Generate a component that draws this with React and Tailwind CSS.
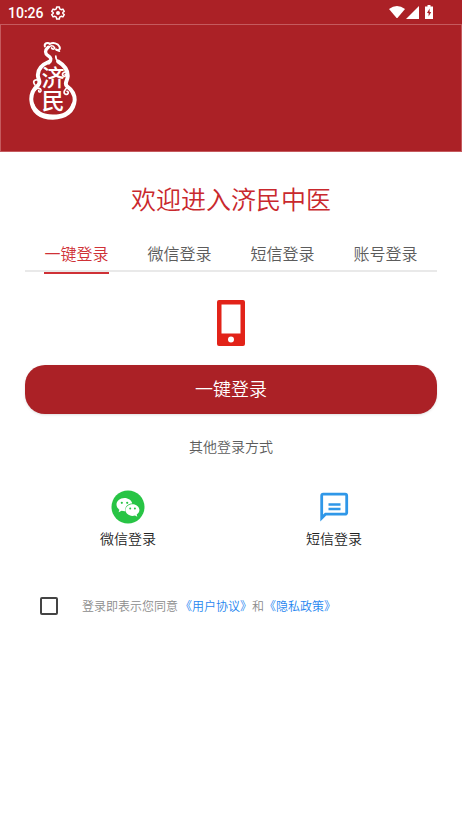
import { useState } from 'react'

const TABS = ['一键登录', '微信登录', '短信登录', '账号登录']

function StatusBar() {
  return (
    <div className="flex h-6 items-center justify-between pl-2 pr-[29px] text-white">
      <div className="flex items-center gap-1.5 pt-0.5 font-[Roboto,sans-serif] text-sm font-medium">
        <span>10:26</span>
        <svg className="h-4 w-4" viewBox="0 0 24 24" fill="none" stroke="currentColor">
          <path strokeWidth="2.200" strokeLinejoin="round" d="M10 3h4l.5 2.800 2.300 1.300 2.600-1 2 3.400-2.200 1.800v1.400l2.200 1.800-2 3.400-2.600-1-2.300 1.300L14 21h-4l-.5-2.800-2.300-1.300-2.600 1-2-3.400 2.200-1.800v-1.400L2.600 9.500l2-3.400 2.600 1 2.300-1.300z" />
          <circle cx="12" cy="12" r="3" fill="currentColor" stroke="none" />
        </svg>
      </div>
      <div className="flex items-center">
        <svg className="h-3 w-4" viewBox="0 0 16 12" fill="currentColor">
          <path d="M0 3 Q8 -3 16 3 L8 12.500 Z" />
        </svg>
        <svg className="ml-px h-[13px] w-[13px]" viewBox="0 0 13 13" fill="currentColor">
          <path d="M13 0v13H0z" />
        </svg>
        <svg className="ml-1.5 h-3.5 w-2" viewBox="0 0 8 14">
          <path d="M2.500 0h3v1.500H8V14H0V1.500h2.500z" fill="currentColor" />
          <path d="M4.600 3.500 2 8h1.600v3.500L6.200 7H4.600z" fill="#ab2126" />
        </svg>
      </div>
    </div>
  )
}

function GourdLogo() {
  return (
    <svg className="h-20 w-12" viewBox="40 34 145 240" fill="none" stroke="#fff" strokeLinecap="round" role="img" aria-label="济民">
      {/* head */}
      <path strokeWidth="6" d="M88 50C85 40 97 36 103 42C113 37 127 40 132 50C136 59 128 64 122 59" />
      <path strokeWidth="5" d="M98 54C104 45 113 46 117 53M108 54C110 59 116 59 118 55M122 59L132 64" />
      <path strokeWidth="10" d="M98 52C87 61 88 71 97 77C107 83 110 90 100 99" />
      {/* gourd body */}
      <path strokeWidth="12" d="M102 95C78 105 65 119 67 139C68 151 77 156 68 166C51 180 46 193 47 211C49 246 74 265 112 265C150 265 176 245 178 211C178 193 169 180 155 170C145 162 156 154 157 140C158 119 146 106 128 95" />
      <path strokeWidth="5" d="M130 96C123 91 120 87 121 79" />
      <path strokeWidth="9" d="M51 223C60 249 83 260 112 260C143 260 165 248 173 223" />
      {/* curls */}
      <path strokeWidth="5" d="M155 127C143 124 138 134 144 139C149 142 153 137 149 134M159 172C147 178 142 190 150 194C158 197 162 187 155 185M58 182C66 171 78 176 76 184C74 190 67 187 70 182M58 166C50 156 56 149 65 151" />
      <text
        x="113"
        y="107"
        className="[writing-mode:vertical-rl]"
        fill="#fff"
        stroke="none"
        fontSize="70"
        fontWeight="500"
      >
        济民
      </text>
    </svg>
  )
}

function PhoneIcon() {
  return (
    <svg className="h-[46px] w-7" viewBox="0 0 28 46" fill="#e22319">
      <path fillRule="evenodd" d="M2 0h24a2 2 0 0 1 2 2v42a2 2 0 0 1-2 2H2a2 2 0 0 1-2-2V2a2 2 0 0 1 2-2zm2.500 4.500v29h19v-29zM14 36.500a3 3 0 1 0 0 6 3 3 0 0 0 0-6z" />
    </svg>
  )
}

function WechatIcon() {
  return (
    <svg className="h-[34px] w-[34px]" viewBox="0 0 34 34">
      <circle cx="17" cy="17" r="16.500" fill="#28c445" />
      <path fill="#fff" d="M13.500 8C8.800 8 5.500 11 5.500 14.600c0 2.100 1.100 3.900 2.900 5.100l-.8 2.600 3-1.500c1.300.4 2.600.5 3.900.4C13.500 16.600 17 13.500 21.300 13.500 20.500 10.300 17.300 8 13.500 8z" />
      <path fill="#fff" d="M21.500 14.300c-4 0-7 2.600-7 5.800s3 5.800 7 5.800c.9 0 1.700-.1 2.500-.4l2.300 1.300-.6-2.200c1.700-1.100 2.700-2.700 2.700-4.500 0-3.200-3-5.800-6.900-5.800z" />
      <g fill="#28c445">
        <circle cx="10.800" cy="12.800" r="1.100" />
        <circle cx="16.200" cy="12.800" r="1.100" />
        <circle cx="19.200" cy="18.400" r="1" />
        <circle cx="23.900" cy="18.400" r="1" />
      </g>
    </svg>
  )
}

function SmsIcon() {
  return (
    <svg className="h-[34px] w-[34px]" viewBox="0 0 34 34" fill="none" stroke="#2f97e8">
      <path strokeWidth="2.800" strokeLinejoin="miter" d="M4.700 28V5.700a1.500 1.500 0 0 1 1.500-1.500h22a1.500 1.500 0 0 1 1.500 1.500v17a1.500 1.500 0 0 1-1.500 1.500H8.500z" />
      <path strokeWidth="2.500" d="M11.500 14.500h12M11.500 19h12" />
    </svg>
  )
}

export default function App() {
  const [active, setActive] = useState(0)
  const [agreed, setAgreed] = useState(false)

  return (
    <div className="min-h-screen bg-white font-['Noto_Sans_CJK_SC',sans-serif] font-[350]">
      <header className="bg-[#ab2126]">
        <StatusBar />
        <div className="h-32 border border-[#c55a5e] px-7 py-4">
          <GourdLogo />
        </div>
      </header>

      <main className="px-[25px]">
        <h1 className="mt-7 text-center text-[25px] leading-9 font-[350] text-[#c9282d]">欢迎进入济民中医</h1>

        <div role="tablist" className="mt-5 grid grid-cols-4 border-b-2 border-[#e9e9e9]">
          {TABS.map((tab, i) => (
            <button
              key={tab}
              role="tab"
              aria-selected={i === active}
              onClick={() => setActive(i)}
              className={`flex justify-center text-base leading-6 ${i === active ? 'text-[#cf3136]' : 'text-[#5c5c5c]'}`}
            >
              <span className={`-mb-1 border-b-2 pt-[5px] pb-[7px] ${i === active ? 'border-[#cf3136]' : 'border-transparent'}`}>{tab}</span>
            </button>
          ))}
        </div>

        <div className="mt-7 flex justify-center">
          <PhoneIcon />
        </div>

        <button className="mt-[19px] h-[49px] w-full rounded-[20px] bg-[#ab2126] pb-1 text-lg text-white shadow-sm">
          一键登录
        </button>

        <p className="mt-5 text-center text-sm leading-6 text-[#5c5c5c]">其他登录方式</p>

        <div className="mt-8 grid grid-cols-2">
          <button className="flex flex-col items-center gap-0.5 text-sm leading-6 text-[#222]">
            <WechatIcon />
            微信登录
          </button>
          <button className="flex flex-col items-center gap-0.5 text-sm leading-6 text-[#222]">
            <SmsIcon />
            短信登录
          </button>
        </div>

        <div className="mt-11 flex items-center pl-[15px] text-xs leading-6 text-[#8c8c8c]">
          <input
            id="agree"
            type="checkbox"
            checked={agreed}
            onChange={(e) => setAgreed(e.target.checked)}
            className="h-[18px] w-[18px] appearance-none rounded-xs border-2 border-[#444] checked:bg-[#ab2126]"
          />
          <div className="ml-6 flex">
            <label htmlFor="agree" className="mr-0.5">登录即表示您同意</label>
            <a href="#agreement" className="text-[#1f86f0]">《用户协议》</a>
            <span>和</span>
            <a href="#privacy" className="text-[#1f86f0]">《隐私政策》</a>
          </div>
        </div>
      </main>
    </div>
  )
}
